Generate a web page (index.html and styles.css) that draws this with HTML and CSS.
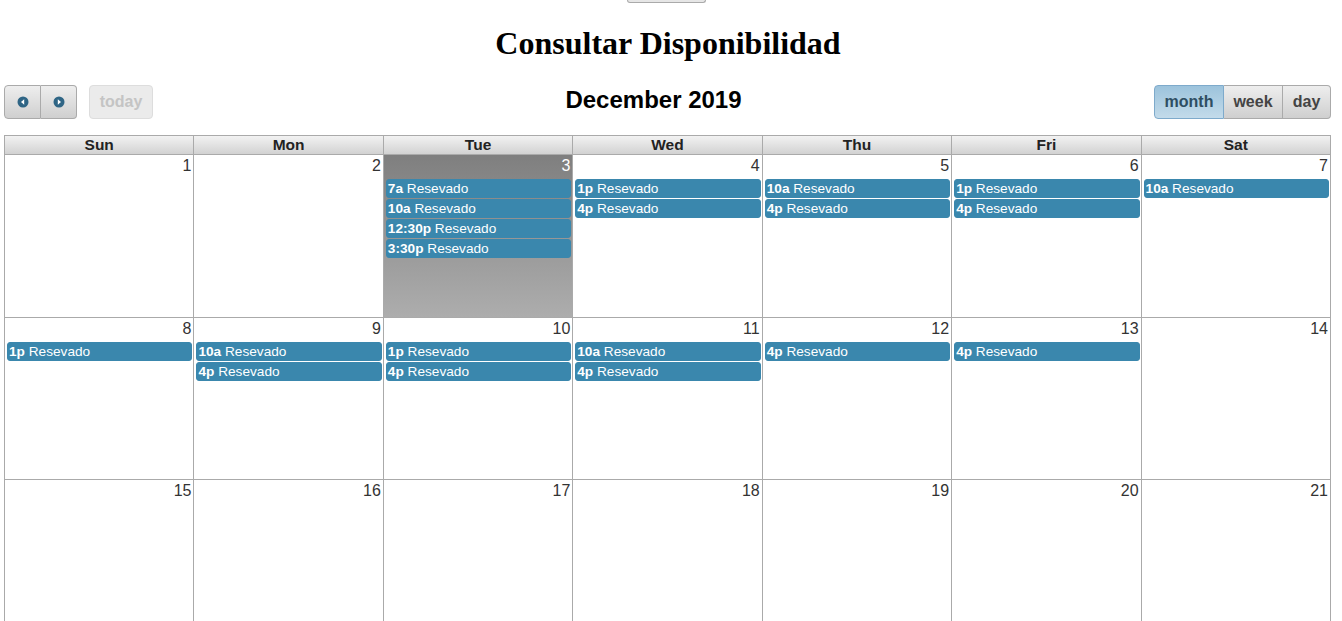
FILE: index.html
```html
<!DOCTYPE html>
<html>
<head>
<meta charset="utf-8">
<link rel="stylesheet" href="styles.css">
</head>
<body>
<div class="topbtn"></div>
<h1 class="title">Consultar Disponibilidad</h1>
<div class="cal">
  <div class="toolbar">
    <div class="left">
      <div class="group">
        <button class="btn icon-btn"><svg width="12" height="12" viewBox="0 0 12 12"><circle cx="6" cy="6" r="5.5" fill="#2f6585"/><path d="M7.2 3.2 L4 6 L7.2 8.8Z" fill="#fff"/></svg></button>
        <button class="btn icon-btn"><svg width="12" height="12" viewBox="0 0 12 12"><circle cx="6" cy="6" r="5.5" fill="#2f6585"/><path d="M4.8 3.2 L8 6 L4.8 8.8Z" fill="#fff"/></svg></button>
      </div>
      <button class="btn today">today</button>
    </div>
    <h2 class="month-title">December 2019</h2>
    <div class="group right">
      <button class="btn active">month</button>
      <button class="btn week">week</button>
      <button class="btn dayb">day</button>
    </div>
  </div>
  <div class="grid">
    <div class="hd">Sun</div><div class="hd">Mon</div><div class="hd">Tue</div><div class="hd">Wed</div><div class="hd">Thu</div><div class="hd">Fri</div><div class="hd">Sat</div>

    <div class="day"><div class="num">1</div></div>
    <div class="day"><div class="num">2</div></div>
    <div class="day today-cell"><div class="num">3</div>
      <div class="ev"><b>7a</b> Resevado</div>
      <div class="ev"><b>10a</b> Resevado</div>
      <div class="ev"><b>12:30p</b> Resevado</div>
      <div class="ev"><b>3:30p</b> Resevado</div>
    </div>
    <div class="day"><div class="num">4</div>
      <div class="ev"><b>1p</b> Resevado</div>
      <div class="ev"><b>4p</b> Resevado</div>
    </div>
    <div class="day"><div class="num">5</div>
      <div class="ev"><b>10a</b> Resevado</div>
      <div class="ev"><b>4p</b> Resevado</div>
    </div>
    <div class="day"><div class="num">6</div>
      <div class="ev"><b>1p</b> Resevado</div>
      <div class="ev"><b>4p</b> Resevado</div>
    </div>
    <div class="day"><div class="num">7</div>
      <div class="ev"><b>10a</b> Resevado</div>
    </div>

    <div class="day"><div class="num">8</div>
      <div class="ev"><b>1p</b> Resevado</div>
    </div>
    <div class="day"><div class="num">9</div>
      <div class="ev"><b>10a</b> Resevado</div>
      <div class="ev"><b>4p</b> Resevado</div>
    </div>
    <div class="day"><div class="num">10</div>
      <div class="ev"><b>1p</b> Resevado</div>
      <div class="ev"><b>4p</b> Resevado</div>
    </div>
    <div class="day"><div class="num">11</div>
      <div class="ev"><b>10a</b> Resevado</div>
      <div class="ev"><b>4p</b> Resevado</div>
    </div>
    <div class="day"><div class="num">12</div>
      <div class="ev"><b>4p</b> Resevado</div>
    </div>
    <div class="day"><div class="num">13</div>
      <div class="ev"><b>4p</b> Resevado</div>
    </div>
    <div class="day"><div class="num">14</div></div>

    <div class="day"><div class="num">15</div></div>
    <div class="day"><div class="num">16</div></div>
    <div class="day"><div class="num">17</div></div>
    <div class="day"><div class="num">18</div></div>
    <div class="day"><div class="num">19</div></div>
    <div class="day"><div class="num">20</div></div>
    <div class="day"><div class="num">21</div></div>
  </div>
</div>
</body>
</html>
```

FILE: styles.css
```css
html, body {
  margin: 0;
  padding: 0;
  background: #fff;
  overflow: hidden;
}
body {
  font-family: "Liberation Sans", Arial, sans-serif;
}
.topbtn {
  width: 77px;
  height: 2px;
  margin-left: calc(50% - 44px);
  border: 1px solid #aaa;
  border-top: none;
  border-radius: 0 0 4px 4px;
  background: #e6e6e6;
}
.title {
  font-family: "Liberation Serif", "Times New Roman", serif;
  font-size: 32px;
  font-weight: bold;
  text-align: center;
  margin: 22px 6px 0 0;
  line-height: 37px;
  color: #000;
}
.cal {
  margin: 0 11px 0 4px;
}
.toolbar {
  display: flex;
  align-items: center;
  margin-top: 23px;
  height: 34px;
  margin-bottom: 16px;
}
.left {
  display: flex;
  gap: 12px;
}
.group {
  display: flex;
}
.btn {
  font-family: "Liberation Sans", Arial, sans-serif;
  font-size: 16px;
  font-weight: bold;
  color: #444;
  height: 34px;
  padding: 0;
  border: 1px solid #aaa;
  background: linear-gradient(#eeeeee, #cfcfcf);
  margin: 0;
  cursor: pointer;
}
.group .btn + .btn {
  border-left: none;
}
.group .btn:first-child {
  border-radius: 4px 0 0 4px;
}
.group .btn:last-child {
  border-radius: 0 4px 4px 0;
}
.icon-btn {
  width: 37px;
  display: flex;
  align-items: center;
  justify-content: center;
}
.icon-btn + .icon-btn {
  width: 36px;
}
.btn.today {
  border-radius: 4px;
  color: #c4c4c4;
  background: #ebebeb;
  border-color: #dddddd;
  width: 64px;
}
.btn.active {
  background: linear-gradient(#9cc3dc, #c3dbea);
  border-color: #7eaacb;
  color: #2e4e62;
  width: 70px;
}
.btn.week {
  width: 59px;
}
.btn.dayb {
  width: 48px;
}
.month-title {
  flex: 1;
  text-align: center;
  font-size: 24px;
  font-weight: bold;
  margin: 0;
  color: #000;
  position: relative;
  top: -2px;
}
.grid {
  display: grid;
  grid-template-columns: repeat(7, 1fr);
  grid-template-rows: 19px 163px 162px 162px;
  border-left: 1px solid #aaa;
  border-top: 1px solid #aaa;
}
.hd {
  border-right: 1px solid #aaa;
  border-bottom: 1px solid #aaa;
  background: linear-gradient(#f2f2f2, #d2d2d2);
  font-weight: bold;
  font-size: 15.5px;
  color: #222;
  text-align: center;
  line-height: 18px;
}
.day {
  border-right: 1px solid #aaa;
  border-bottom: 1px solid #aaa;
  overflow: hidden;
}
.num {
  text-align: right;
  font-size: 16px;
  color: #333;
  line-height: 20px;
  padding: 1px 2px 0 0;
  height: 23px;
}
.today-cell {
  background: linear-gradient(#7f7f7f, #adadad);
}
.today-cell .num {
  color: #fff;
}
.ev {
  background: #3a87ad;
  border: 1px solid #3a87ad;
  border-radius: 3px;
  color: #fff;
  font-size: 13.65px;
  line-height: 17px;
  margin: 0 1px 1px 2px;
  padding-left: 1px;
  white-space: nowrap;
  overflow: hidden;
}
.ev b {
  font-weight: bold;
}
```
